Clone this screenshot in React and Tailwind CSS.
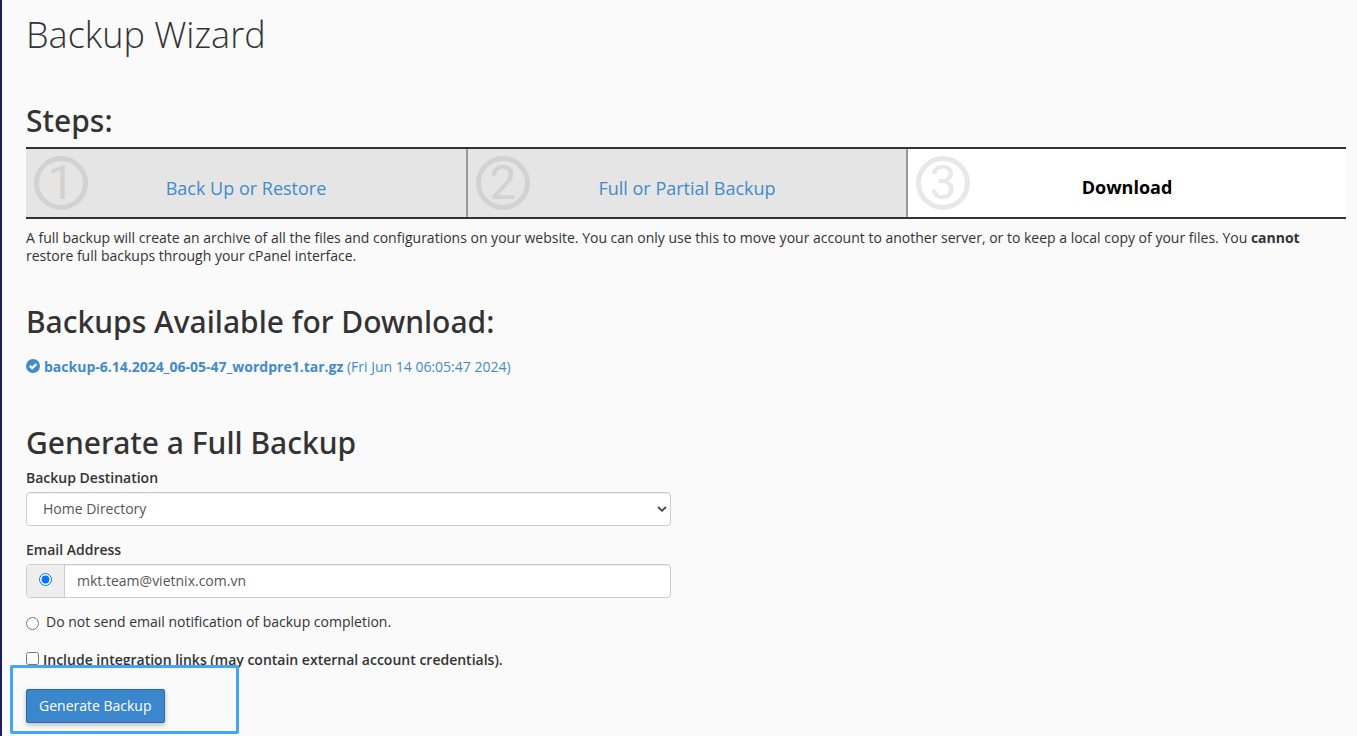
import React from 'react';

const steps = [
  { number: 1, label: 'Back Up or Restore' },
  { number: 2, label: 'Full or Partial Backup' },
  { number: 3, label: 'Download', current: true }
];

function StepNumber({ number, current }) {
  return (
    <span
      className={`flex size-[54px] items-center justify-center rounded-full border-5 font-['Roboto',sans-serif] text-5xl leading-none ${
        current ? 'border-[#e8e8e8] text-[#e8e8e8]' : 'border-[#d2d2d2] text-[#d2d2d2]'
      }`}
    >
      {number}
    </span>
  );
}

function Steps() {
  return (
    <ol className="grid grid-cols-3 border-y-2 border-[#333333]">
      {steps.map((step) => (
        <li
          key={step.number}
          className={`grid h-[68px] grid-cols-[54px_1fr_54px] items-center px-2 text-center text-lg ${
            step.number > 1 ? 'border-l-2 border-[#999999]' : ''
          } ${step.current ? 'bg-white' : 'bg-[#e5e5e5]'}`}
        >
          <StepNumber number={step.number} current={step.current} />
          {step.current ? (
            <span className="pt-2 font-bold text-black">{step.label}</span>
          ) : (
            <a href="#" className="pt-2.5 text-[#428bca]">{step.label}</a>
          )}
        </li>
      ))}
    </ol>
  );
}

function CheckIcon() {
  return (
    <svg viewBox="0 0 14 14" className="mt-px size-3.5 shrink-0" aria-hidden="true">
      <circle cx="7" cy="7" r="7" fill="#428bca" />
      <path d="M3.7 6.9 L6.2 9.2 L10.4 5" fill="none" stroke="#fafafa" strokeWidth="2.4" />
    </svg>
  );
}

function BackupForm() {
  return (
    <form className="w-1/2 pr-[15px]" onSubmit={(e) => e.preventDefault()}>
      <label htmlFor="destination" className="mb-[5px] block font-semibold">Backup Destination</label>
      <div className="relative">
        <select
          id="destination"
          className="block h-[34px] w-full appearance-none rounded border border-[#cccccc] bg-white px-4 text-[#555555] shadow-[inset_0_1px_1px_rgba(0,0,0,0.075)]"
        >
          <option>Home Directory</option>
        </select>
        <svg viewBox="0 0 10 6" className="pointer-events-none absolute top-3.5 right-1 h-1.5 w-2.5" aria-hidden="true">
          <path d="M1 1 L5 4.8 L9 1" fill="none" stroke="#444444" strokeWidth="1.8" />
        </svg>
      </div>

      <label htmlFor="email" className="mt-[15px] mb-[5px] block font-semibold">Email Address</label>
      <div className="flex h-[34px] overflow-hidden rounded border border-[#cccccc] bg-white shadow-[inset_0_1px_1px_rgba(0,0,0,0.075)]">
        <span className="flex w-[38px] shrink-0 justify-center border-r border-[#cccccc] bg-[#eeeeee] pt-2">
          <input
            type="radio"
            name="notify"
            aria-label="Send email notification"
            defaultChecked
            className="size-[13px] accent-[#0075ff]"
          />
        </span>
        <input
          id="email"
          type="text"
          defaultValue="mkt.team@vietnix.com.vn"
          className="min-w-0 flex-1 px-3 text-[#555555] outline-none"
        />
      </div>

      <label className="mt-[15px] flex items-center gap-[7px]">
        <input type="radio" name="notify" className="mt-0.5 size-[13px]" />
        Do not send email notification of backup completion.
      </label>

      <label className="mt-5 flex items-start gap-1 font-semibold">
        <input type="checkbox" className="mt-px size-[13px]" />
        Include integration links (may contain external account credentials).
      </label>

      <div className="relative mt-5">
        <button
          type="submit"
          className="h-[34px] rounded-xs border border-[#2d6ca2] bg-[#3a87cd] px-3 font-medium text-white shadow-[0_2px_5px_rgba(0,0,0,0.26)]"
        >
          Generate Backup
        </button>
        <div className="pointer-events-none absolute -top-6 -left-4 h-[69px] w-[229px] rounded-xs border-3 border-[#42a5f5]" />
      </div>
    </form>
  );
}

export default function App() {
  return (
    <main className="min-h-screen overflow-hidden border-l-2 border-[#1b1f5e] bg-[#fafafa] pr-[11px] pb-[13px] pl-6 font-['Open_Sans',sans-serif] text-sm leading-[18px] text-[#333333]">
      <h1 className="mt-[15px] text-4xl leading-10 font-light">Backup Wizard</h1>

      <h2 className="mt-[46px] mb-[6px] font-['Noto_Sans',sans-serif] text-3xl leading-10 font-medium">Steps:</h2>
      <Steps />
      <p className="mt-2.5">
        A full backup will create an archive of all the files and configurations on your website. You can only use this
        to move your account to another server, or to keep a local copy of your files. You{' '}
        <strong className="font-bold">cannot</strong> restore full backups through your cPanel interface.
      </p>

      <h2 className="mt-[37px] font-['Noto_Sans',sans-serif] text-3xl leading-10 font-medium">
        Backups Available for Download:
      </h2>
      <a href="#" className="mt-4 flex items-start gap-1 text-[#428bca]">
        <CheckIcon />
        <span>
          <b className="font-bold">backup-6.14.2024_06-05-47_wordpre1.tar.gz</b> (Fri Jun 14 06:05:47 2024)
        </span>
      </a>

      <h2 className="mt-[47px] mb-[6px] font-['Noto_Sans',sans-serif] text-3xl leading-10 font-medium">
        Generate a Full Backup
      </h2>
      <BackupForm />
    </main>
  );
}
